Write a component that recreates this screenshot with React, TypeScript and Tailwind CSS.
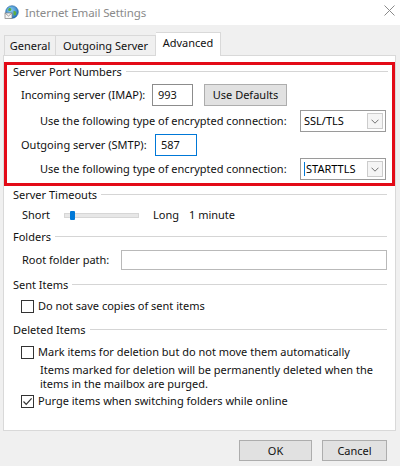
import React from "react";

function GlobeIcon() {
  return (
    <svg width="15" height="15" viewBox="0 0 15 15">
      <defs>
        <radialGradient id="gl" cx="0.4" cy="0.35" r="0.7">
          <stop offset="0" stopColor="#8fd0f5" />
          <stop offset="1" stopColor="#1f6fb8" />
        </radialGradient>
      </defs>
      <circle cx="8" cy="7" r="6.3" fill="url(#gl)" stroke="#1c5f9e" strokeWidth="0.6" />
      <path d="M5 3 C7 2.5 8 4 7 5.5 C6 6.5 4.5 6 4 5 Z" fill="#5fae3e" />
      <path d="M9.5 6 C11.5 5.5 13 7 12 9.5 C11 11 9.5 10.5 9.5 9 Z" fill="#5fae3e" />
      <rect x="1" y="8" width="7" height="5.5" fill="#f4f4f4" stroke="#7a7a7a" strokeWidth="0.7" />
      <path d="M1.3 8.3 L4.5 11 L7.7 8.3" fill="none" stroke="#7a7a7a" strokeWidth="0.7" />
    </svg>
  );
}

function CloseIcon() {
  return (
    <svg width="11" height="11" viewBox="0 0 11 11">
      <path d="M0.5 0.5 L10.5 10.5 M10.5 0.5 L0.5 10.5" stroke="#8a8a8a" strokeWidth="1" />
    </svg>
  );
}

function Chevron() {
  return (
    <svg width="8" height="5" viewBox="0 0 8 5">
      <path d="M0.5 0.7 L4 4.2 L7.5 0.7" fill="none" stroke="#707070" strokeWidth="1" />
    </svg>
  );
}

function GroupHeader({ title }: { title: string }) {
  return (
    <div className="h-[14px] flex items-center">
      <span className="leading-[14px] whitespace-nowrap">{title}</span>
      <div className="flex-1 h-px bg-[#d5d5d5] ml-[4px] mt-[-1px]" />
    </div>
  );
}

function Checkbox({ checked }: { checked?: boolean }) {
  return (
    <div className="w-[13px] h-[13px] border border-[#333333] bg-white flex items-center justify-center shrink-0">
      {checked && (
        <svg width="11" height="11" viewBox="0 0 11 11">
          <path d="M1.5 5.5 L4.2 8.3 L9.6 2.4" fill="none" stroke="#333333" strokeWidth="1.2" />
        </svg>
      )}
    </div>
  );
}

function Select({ value, caret }: { value: string; caret?: boolean }) {
  return (
    <div className="w-[86px] h-[22px] border border-[#9a9a9a] bg-white flex items-center pl-[3px] pr-[2px] shrink-0">
      {caret && <div className="w-px h-[14px] bg-[#0078d7] mr-[1px]" />}
      <span className="flex-1 leading-[14px] whitespace-nowrap text-black">{value}</span>
      <div className="w-[16px] h-[16px] border border-[#cccccc] bg-[#f5f5f5] flex items-center justify-center">
        <Chevron />
      </div>
    </div>
  );
}

export default function App() {
  return (
    <div className="w-[400px] h-[466px] bg-[#f0f0f0] text-[11px] text-[#111111] font-['Noto_Sans',sans-serif] flex flex-col overflow-hidden whitespace-nowrap">
      {/* title bar */}
      <div className="h-[25px] bg-white flex items-center pl-[4px] pr-[5px] shrink-0">
        <GlobeIcon />
        <span className="ml-[6px] text-[#8a8a8a] text-[11.5px] tracking-[-0.1px] leading-[16px]">Internet Email Settings</span>
        <div className="ml-auto mb-[4px]">
          <CloseIcon />
        </div>
      </div>

      {/* tab strip */}
      <div className="h-[30px] flex items-end pl-[4px] shrink-0 relative z-10">
        <div className="h-[20px] w-[52px] border border-b-0 border-[#d9d9d9] flex items-center justify-center leading-[14px]">
          General
        </div>
        <div className="h-[20px] w-[100px] border border-l-0 border-b-0 border-[#d9d9d9] flex items-center justify-center leading-[14px]">
          Outgoing Server
        </div>
        <div className="h-[24px] w-[65px] border border-l-0 border-b-0 border-[#d9d9d9] bg-white flex items-start justify-center pt-[3px] leading-[14px] mb-[-1px]">
          Advanced
        </div>
      </div>

      {/* tab panel */}
      <div className="ml-[3px] w-[393px] h-[376px] border border-[#d9d9d9] bg-white flex flex-col shrink-0">
        {/* server ports */}
        <div className="mt-[6px] border-[3px] border-[#e30a17] flex flex-col pl-[6px] pr-[4px] pb-[3px]">
          <GroupHeader title="Server Port Numbers" />
          <div className="mt-[5px] h-[22px] flex items-center pl-[8px]">
            <span className="w-[131px] leading-[14px]">Incoming server (IMAP):</span>
            <div className="w-[41px] h-[22px] border border-[#8c8c8c] flex items-center pl-[5px] leading-[14px]">993</div>
            <div className="ml-[11px] w-[83px] h-[22px] border border-[#adadad] bg-[#e1e1e1] flex items-center justify-center leading-[14px]">
              Use Defaults
            </div>
          </div>
          <div className="mt-[4px] h-[22px] flex items-center pl-[27px] pr-[2px]">
            <span className="flex-1 leading-[14px]">Use the following type of encrypted connection:</span>
            <Select value="SSL/TLS" />
          </div>
          <div className="mt-[2px] h-[22px] flex items-center pl-[8px]">
            <span className="w-[134px] leading-[14px]">Outgoing server (SMTP):</span>
            <div className="w-[42px] h-[22px] border border-[#0078d7] flex items-center pl-[5px] leading-[14px]">587</div>
          </div>
          <div className="mt-[2px] h-[22px] flex items-center pl-[27px] pr-[2px]">
            <span className="flex-1 leading-[14px]">Use the following type of encrypted connection:</span>
            <Select value="STARTTLS" caret />
          </div>
        </div>

        {/* remaining groups */}
        <div className="flex flex-col pl-[9px] pr-[8px]">
          <div className="mt-[2px]">
            <GroupHeader title="Server Timeouts" />
          </div>
          <div className="mt-[5px] h-[16px] flex items-center pl-[9px]">
            <span className="w-[42px] leading-[14px]">Short</span>
            <div className="relative w-[75px] h-[5px] border border-[#d6d6d6] bg-[#e7e7e7]">
              <div className="absolute left-[5px] top-[-3px] w-[5px] h-[9px] rounded-[1px] bg-[#0078d7]" />
            </div>
            <span className="ml-[14px] w-[36px] leading-[14px]">Long</span>
            <span className="leading-[14px]">1 minute</span>
          </div>

          <div className="mt-[7px]">
            <GroupHeader title="Folders" />
          </div>
          <div className="mt-[6px] h-[20px] flex items-center pl-[9px]">
            <span className="w-[99px] leading-[14px]">Root folder path:</span>
            <div className="flex-1 h-[20px] border border-[#b9b9b9]" />
          </div>

          <div className="mt-[8px]">
            <GroupHeader title="Sent Items" />
          </div>
          <div className="mt-[6px] h-[16px] flex items-center pl-[8px]">
            <Checkbox />
            <span className="ml-[4px] leading-[14px]">Do not save copies of sent items</span>
          </div>

          <div className="mt-[9px]">
            <GroupHeader title="Deleted Items" />
          </div>
          <div className="mt-[7px] h-[16px] flex items-center pl-[8px]">
            <Checkbox />
            <span className="ml-[4px] leading-[14px]">Mark items for deletion but do not move them automatically</span>
          </div>
          <div className="mt-[3px] pl-[27px] leading-[14px]">
            <div>Items marked for deletion will be permanently deleted when the</div>
            <div>items in the mailbox are purged.</div>
          </div>
          <div className="mt-[2px] h-[16px] flex items-center pl-[8px]">
            <Checkbox checked />
            <span className="ml-[4px] leading-[14px]">Purge items when switching folders while online</span>
          </div>
        </div>
      </div>

      {/* dialog buttons */}
      <div className="mt-[9px] flex justify-end pr-[13px] gap-[10px]">
        <div className="w-[73px] h-[21px] border border-[#adadad] bg-[#e1e1e1] flex items-center justify-center leading-[14px]">OK</div>
        <div className="w-[65px] h-[21px] border border-[#adadad] bg-[#e1e1e1] flex items-center justify-center leading-[14px]">Cancel</div>
      </div>
    </div>
  );
}
